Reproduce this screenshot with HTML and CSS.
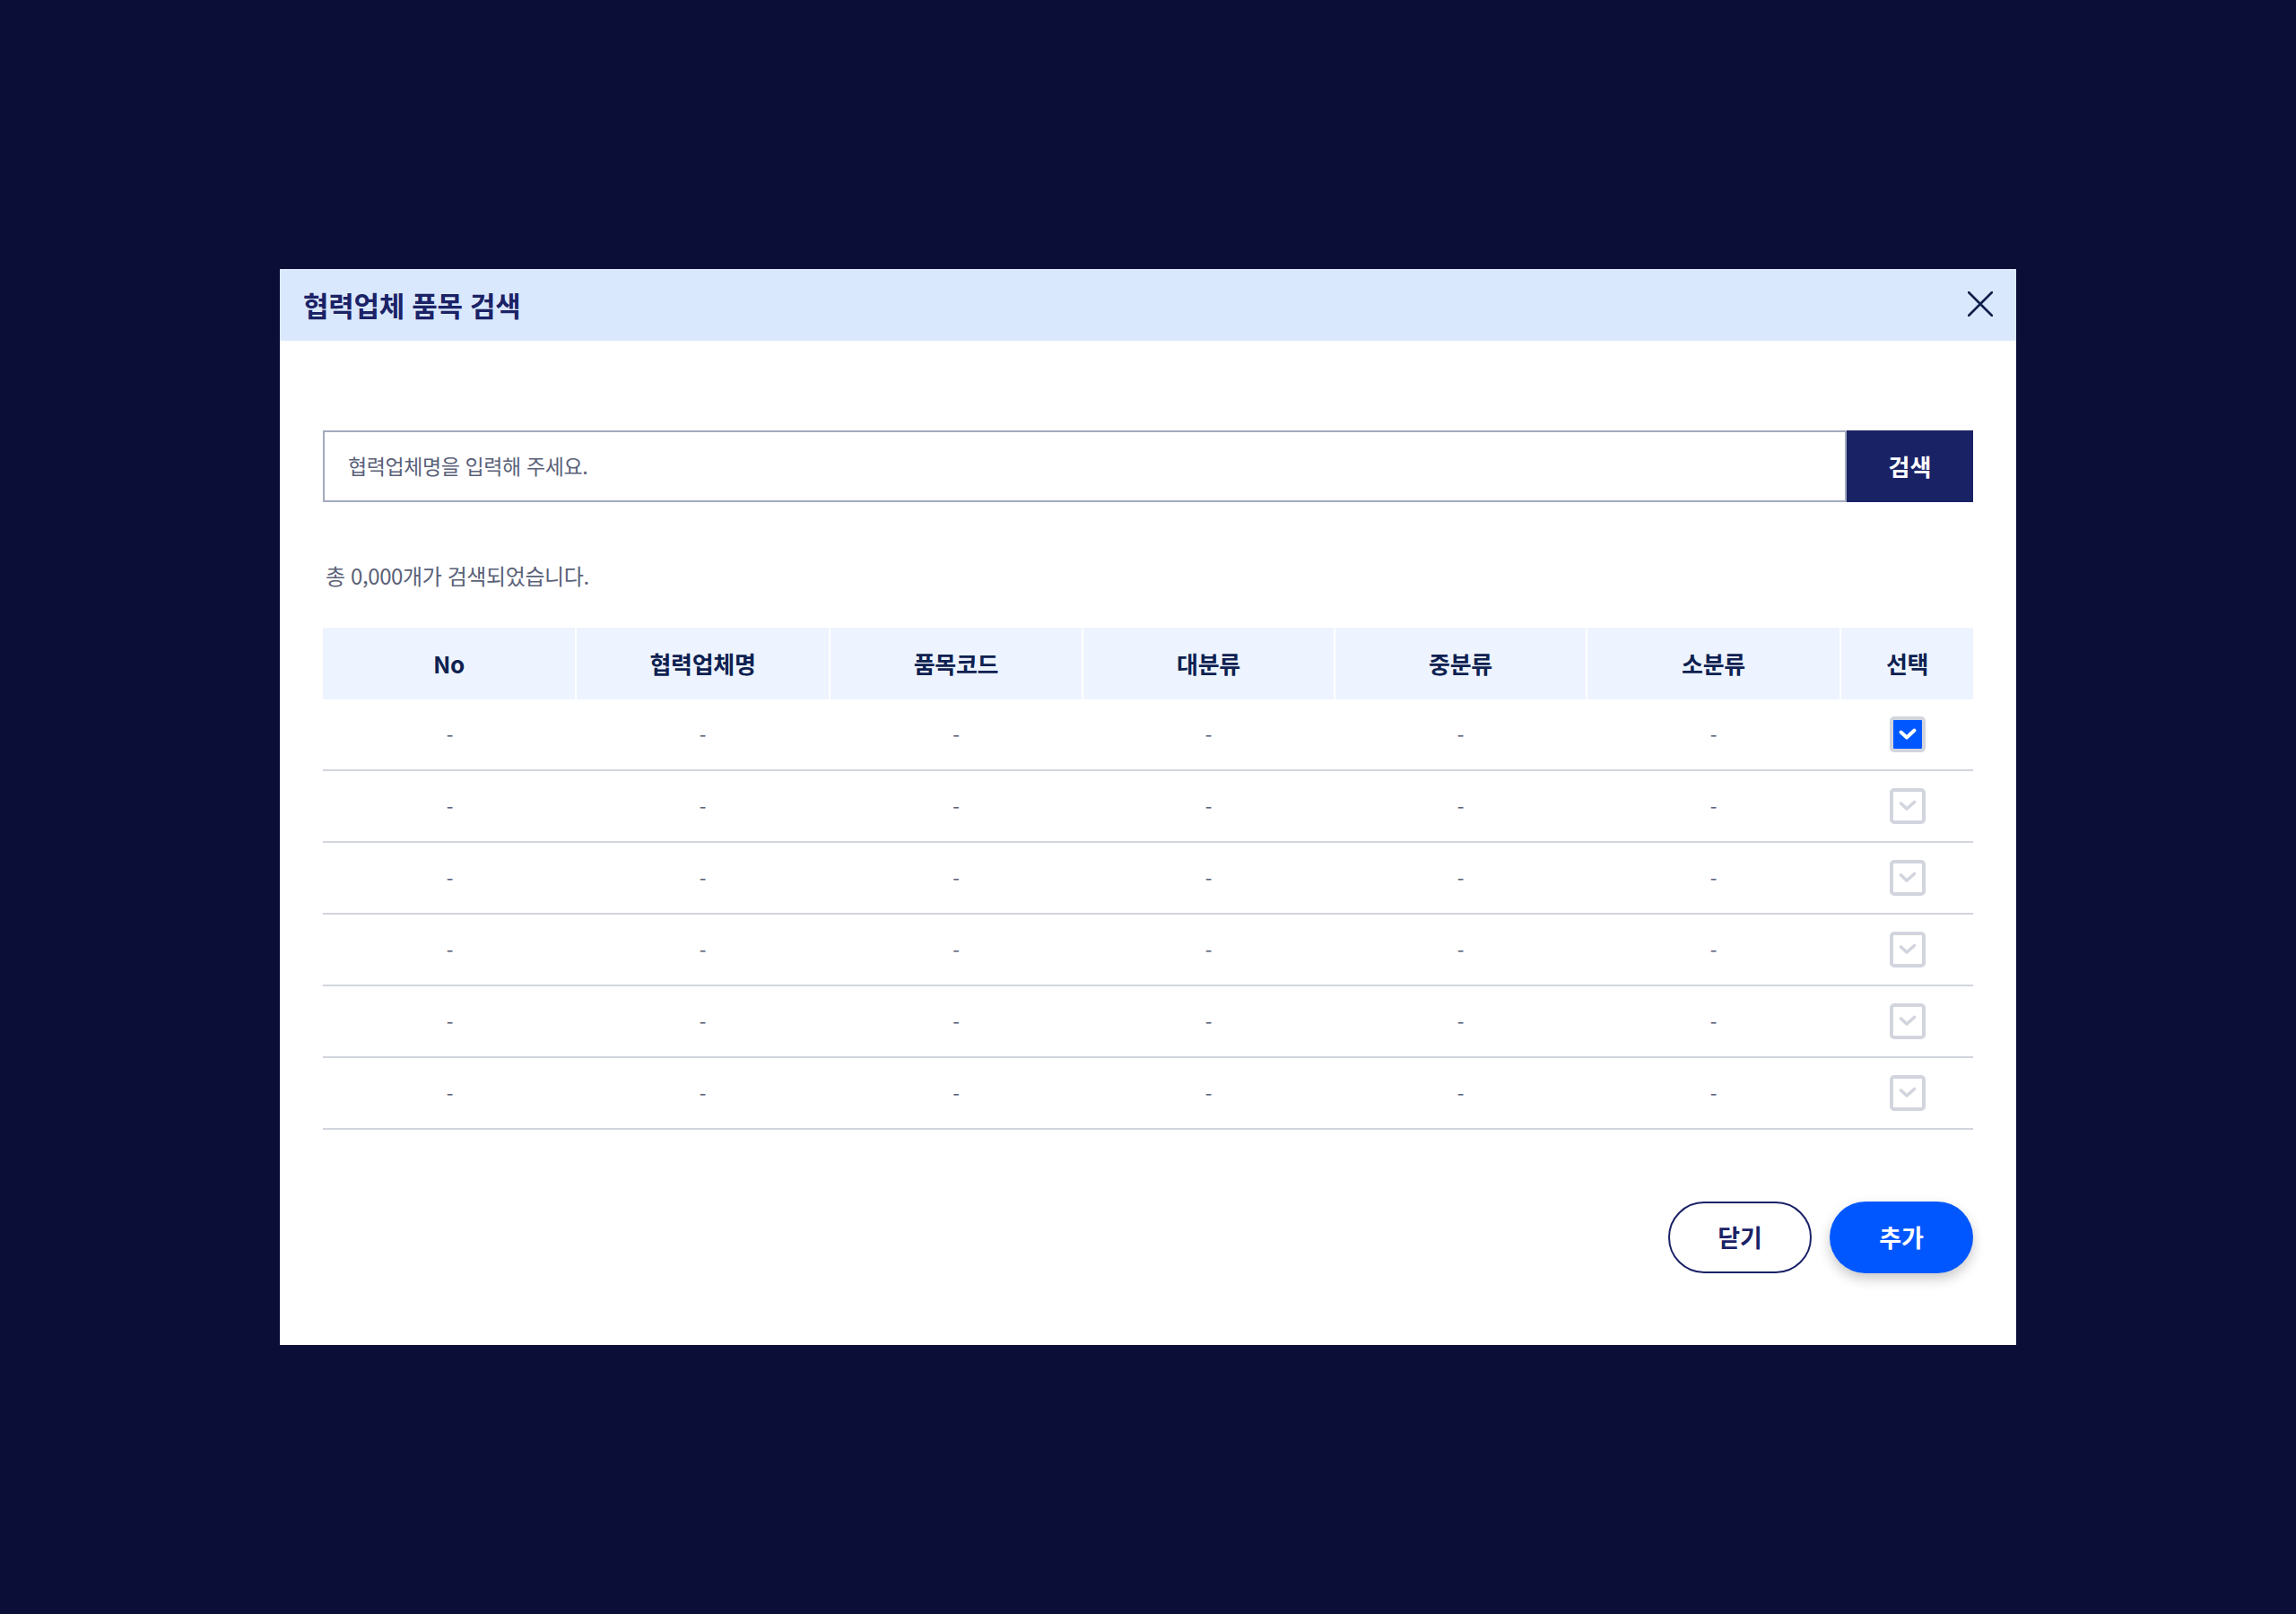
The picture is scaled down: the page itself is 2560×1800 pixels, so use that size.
FILE: index.html
```html
<!DOCTYPE html>
<html lang="ko">
<head>
<meta charset="utf-8">
<title>협력업체 품목 검색</title>
<link rel="stylesheet" href="styles.css">
</head>
<body>
<div class="modal">
  <div class="modal-header">
    <h1 class="modal-title">협력업체 품목 검색</h1>
    <button class="close-btn" aria-label="닫기">
      <svg width="28" height="28" viewBox="0 0 28 28"><path d="M1 1 L27 27 M27 1 L1 27" stroke="#0f1f4a" stroke-width="2.6" stroke-linecap="round" fill="none"/></svg>
    </button>
  </div>
  <div class="modal-body">
    <div class="search-row">
      <div class="search-input">협력업체명을 입력해 주세요.</div>
      <button class="search-btn">검색</button>
    </div>
    <p class="count">총 0,000개가 검색되었습니다.</p>
    <div class="grid">
      <div class="row head">
        <div class="cell">No</div>
        <div class="cell">협력업체명</div>
        <div class="cell">품목코드</div>
        <div class="cell">대분류</div>
        <div class="cell">중분류</div>
        <div class="cell">소분류</div>
        <div class="cell">선택</div>
      </div>
      <div class="row">
        <div class="cell">-</div><div class="cell">-</div><div class="cell">-</div><div class="cell">-</div><div class="cell">-</div><div class="cell">-</div>
        <div class="cell"><span class="chk on"><svg width="22" height="16" viewBox="0 0 22 16"><path d="M3.5 5.5 L10 11.5 L18.5 3.5" stroke="#fff" stroke-width="4" fill="none" stroke-linecap="round" stroke-linejoin="round"/></svg></span></div>
      </div>
      <div class="row">
        <div class="cell">-</div><div class="cell">-</div><div class="cell">-</div><div class="cell">-</div><div class="cell">-</div><div class="cell">-</div>
        <div class="cell"><span class="chk"><svg width="22" height="16" viewBox="0 0 22 16"><path d="M3.5 5 L10 11 L18.5 3.5" stroke="#d2d5de" stroke-width="3.6" fill="none" stroke-linecap="round" stroke-linejoin="round"/></svg></span></div>
      </div>
      <div class="row">
        <div class="cell">-</div><div class="cell">-</div><div class="cell">-</div><div class="cell">-</div><div class="cell">-</div><div class="cell">-</div>
        <div class="cell"><span class="chk"><svg width="22" height="16" viewBox="0 0 22 16"><path d="M3.5 5 L10 11 L18.5 3.5" stroke="#d2d5de" stroke-width="3.6" fill="none" stroke-linecap="round" stroke-linejoin="round"/></svg></span></div>
      </div>
      <div class="row">
        <div class="cell">-</div><div class="cell">-</div><div class="cell">-</div><div class="cell">-</div><div class="cell">-</div><div class="cell">-</div>
        <div class="cell"><span class="chk"><svg width="22" height="16" viewBox="0 0 22 16"><path d="M3.5 5 L10 11 L18.5 3.5" stroke="#d2d5de" stroke-width="3.6" fill="none" stroke-linecap="round" stroke-linejoin="round"/></svg></span></div>
      </div>
      <div class="row">
        <div class="cell">-</div><div class="cell">-</div><div class="cell">-</div><div class="cell">-</div><div class="cell">-</div><div class="cell">-</div>
        <div class="cell"><span class="chk"><svg width="22" height="16" viewBox="0 0 22 16"><path d="M3.5 5 L10 11 L18.5 3.5" stroke="#d2d5de" stroke-width="3.6" fill="none" stroke-linecap="round" stroke-linejoin="round"/></svg></span></div>
      </div>
      <div class="row">
        <div class="cell">-</div><div class="cell">-</div><div class="cell">-</div><div class="cell">-</div><div class="cell">-</div><div class="cell">-</div>
        <div class="cell"><span class="chk"><svg width="22" height="16" viewBox="0 0 22 16"><path d="M3.5 5 L10 11 L18.5 3.5" stroke="#d2d5de" stroke-width="3.6" fill="none" stroke-linecap="round" stroke-linejoin="round"/></svg></span></div>
      </div>
    </div>
    <div class="actions">
      <button class="btn btn-outline">닫기</button>
      <button class="btn btn-primary">추가</button>
    </div>
  </div>
</div>
</body>
</html>
```
FILE: styles.css
```css
* { box-sizing: border-box; }
html, body {
  margin: 0;
  padding: 0;
  background: #0b0e37;
  font-family: "Noto Sans CJK KR", "Noto Sans", sans-serif;
}
body { width: 2560px; height: 1800px; overflow: hidden; }
.modal {
  width: 1936px;
  height: 1200px;
  margin: 300px auto 0;
  background: #ffffff;
}
.modal-header {
  height: 80px;
  background: #dae8fe;
  display: flex;
  align-items: center;
  justify-content: space-between;
  padding: 0 20px 2px 26px;
}
.modal-title {
  margin: 0;
  font-size: 31px;
  font-weight: 700;
  color: #1b2266;
  letter-spacing: -0.3px;
}
.close-btn {
  width: 40px;
  height: 40px;
  border: 0;
  background: transparent;
  padding: 0;
  display: flex;
  align-items: center;
  justify-content: center;
}
.modal-body {
  padding: 100px 48px 80px;
}
.search-row {
  display: flex;
  height: 80px;
}
.search-input {
  flex: 1;
  border: 2px solid #a3aabd;
  display: flex;
  align-items: center;
  padding-left: 26px;
  padding-bottom: 2px;
  font-size: 23px;
  color: #5a6178;
  letter-spacing: -0.4px;
}
.search-btn {
  width: 141px;
  border: 0;
  background: #1a2266;
  color: #ffffff;
  font-family: inherit;
  font-size: 26px;
  font-weight: 700;
  padding-bottom: 2px;
}
.count {
  margin: 64px 0 40px;
  padding-left: 3px;
  line-height: 36px;
  font-size: 24px;
  color: #5a6178;
  letter-spacing: -0.4px;
}
.row {
  display: grid;
  grid-template-columns: 281px 283px 282px 281px 281px 283px 1fr;
  height: 80px;
  border-bottom: 2px solid #d2d5de;
}
.row.head {
  border-bottom: 0;
}
.cell {
  display: flex;
  align-items: center;
  justify-content: center;
  font-size: 22px;
  color: #5a6178;
  padding-left: 2px;
}
.head .cell {
  background: #edf4ff;
  font-size: 26px;
  font-weight: 700;
  color: #0e2150;
  letter-spacing: -0.3px;
  padding-left: 0;
  padding-bottom: 2px;
}
.head .cell + .cell {
  border-left: 2px solid #ffffff;
}
.chk {
  width: 40px;
  height: 40px;
  border: 4px solid #d2d5de;
  border-radius: 5px;
  display: flex;
  align-items: center;
  justify-content: center;
  background: #ffffff;
}
.chk.on {
  background: #0057ff;
}
.actions {
  margin-top: 80px;
  display: flex;
  justify-content: flex-end;
  gap: 20px;
}
.btn {
  width: 160px;
  height: 80px;
  border-radius: 40px;
  font-family: inherit;
  font-size: 27px;
  font-weight: 700;
  padding-bottom: 2px;
}
.btn-outline {
  background: #ffffff;
  border: 2px solid #1a2266;
  color: #1a2266;
}
.btn-primary {
  background: #0057ff;
  border: 0;
  color: #ffffff;
  box-shadow: 0 6px 14px rgba(0, 0, 0, 0.22);
}
```
